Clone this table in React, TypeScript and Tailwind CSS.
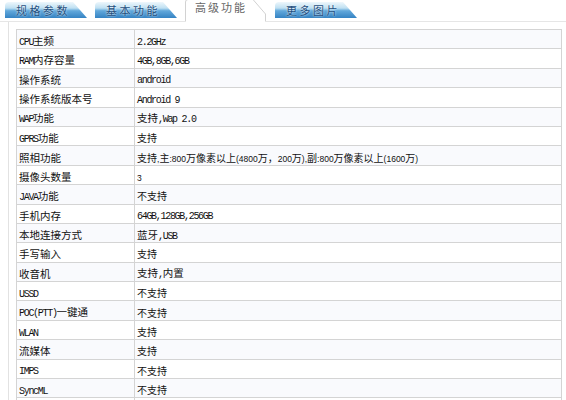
import React from "react";

type Row = { label: string; value: string; sans?: boolean };

const ROWS: Row[] = [
  { label: "CPU主频", value: "2.2GHz" },
  { label: "RAM内存容量", value: "4GB,8GB,6GB" },
  { label: "操作系统", value: "android" },
  { label: "操作系统版本号", value: "Android 9" },
  { label: "WAP功能", value: "支持,Wap 2.0" },
  { label: "GPRS功能", value: "支持", sans: true },
  { label: "照相功能", value: "支持,主:800万像素以上(4800万，200万),副:800万像素以上(1600万)", sans: true },
  { label: "摄像头数量", value: "3", sans: true },
  { label: "JAVA功能", value: "不支持", sans: true },
  { label: "手机内存", value: "64GB,128GB,256GB" },
  { label: "本地连接方式", value: "蓝牙,USB" },
  { label: "手写输入", value: "支持", sans: true },
  { label: "收音机", value: "支持,内置" },
  { label: "USSD", value: "不支持", sans: true },
  { label: "POC(PTT)一键通", value: "不支持", sans: true },
  { label: "WLAN", value: "支持", sans: true },
  { label: "流媒体", value: "支持", sans: true },
  { label: "IMPS", value: "不支持", sans: true },
  { label: "SyncML", value: "不支持", sans: true },
  { label: "", value: "" },
];

const CJK = /([\u3000-\u9fff\uff00-\uffef]+)/;

// split text into CJK / latin runs so latin can get its own font
const Txt = ({ text, sans }: { text: string; sans?: boolean }) => {
  const parts = text.split(CJK).filter(Boolean);
  return (
    <span className="whitespace-pre">
      {parts.map((p, i) =>
        CJK.test(p) ? (
          <span
            key={i}
            className={
              sans
                ? "font-['Noto_Sans_CJK_SC',sans-serif] text-[10px]"
                : "font-['Noto_Sans_CJK_SC',sans-serif] text-[10.5px]"
            }
          >
            {p}
          </span>
        ) : sans ? (
          <span key={i} className="font-['Liberation_Sans',sans-serif] text-[8.5px]">
            {p}
          </span>
        ) : (
          <span key={i} className="font-['Liberation_Mono',monospace] text-[10px] tracking-[-1.3px]">
            {p}
          </span>
        )
      )}
    </span>
  );
};

const BlueTab = ({ label, className }: { label: string; className: string }) => (
  <div className={`relative h-[16px] w-[82px] ${className}`}>
    <svg className="absolute inset-0" width="82" height="16" viewBox="0 0 82 16">
      <defs>
        <linearGradient id="tabg" x1="0" y1="0" x2="0" y2="1">
          <stop offset="0" stopColor="#eef7fc" />
          <stop offset="0.38" stopColor="#bfe0f2" />
          <stop offset="0.55" stopColor="#62a8db" />
          <stop offset="1" stopColor="#3583c3" />
        </linearGradient>
      </defs>
      <path d="M0 16 L0 4 Q0 0 4 0 L68 0 L82 16 Z" fill="url(#tabg)" />
    </svg>
    <div className="relative flex h-full items-center pl-[11px] font-['Noto_Sans_CJK_SC',sans-serif] text-[11px] leading-none tracking-[2.5px] text-[#1f4f7e] [text-shadow:0_0_2px_#fff]">
      {label}
    </div>
  </div>
);

export default function App() {
  return (
    <div className="h-[400px] w-[566px] overflow-hidden bg-white">
      {/* Tabs */}
      <div className="flex h-[22px] items-end border-b border-[#e6e6e6]">
        <BlueTab label="规格参数" className="mb-[3px] ml-[5px]" />
        <BlueTab label="基本功能" className="mb-[3px] ml-[8px]" />
        <div className="relative ml-[8px] h-[22px] w-[81px] bg-white">
          <svg className="absolute inset-0" width="81" height="22" viewBox="0 0 81 22">
            <path d="M0.5 22 L0.5 3 Q0.5 0.5 3 0.5 L68 0.5 L80.5 15 L80.5 22" fill="#fff" stroke="#d2d2d2" />
          </svg>
          <div className="relative flex h-[17px] items-center pl-[10px] font-['Noto_Sans_CJK_SC',sans-serif] text-[11px] leading-none tracking-[2px] text-[#666]">
            高级功能
          </div>
          <div className="absolute bottom-[-1px] left-[1px] h-[1px] w-[79px] bg-white" />
        </div>
        <BlueTab label="更多图片" className="mb-[3px] ml-[9px]" />
      </div>

      {/* Panel */}
      <div className="ml-[8px] border-l border-[#e2e2e2] pl-[7px] pt-[7px]">
        <div className="w-[546px] border-l border-r border-t border-[#d4d4d4]">
          {ROWS.map((r, i) => (
            <div
              key={i}
              className={`flex h-[19.4px] items-center border-b border-[#d4d4d4] leading-none text-[#111] ${
                i % 2 === 0 ? "bg-[#f9fafd]" : "bg-white"
              }`}
            >
              <div className="flex h-full w-[118px] shrink-0 items-center border-r border-[#d4d4d4] pl-[2px]">
                <Txt text={r.label} />
              </div>
              <div className="flex h-full items-center pl-[2px]">
                <Txt text={r.value} sans={r.sans} />
              </div>
            </div>
          ))}
        </div>
      </div>
    </div>
  );
}
